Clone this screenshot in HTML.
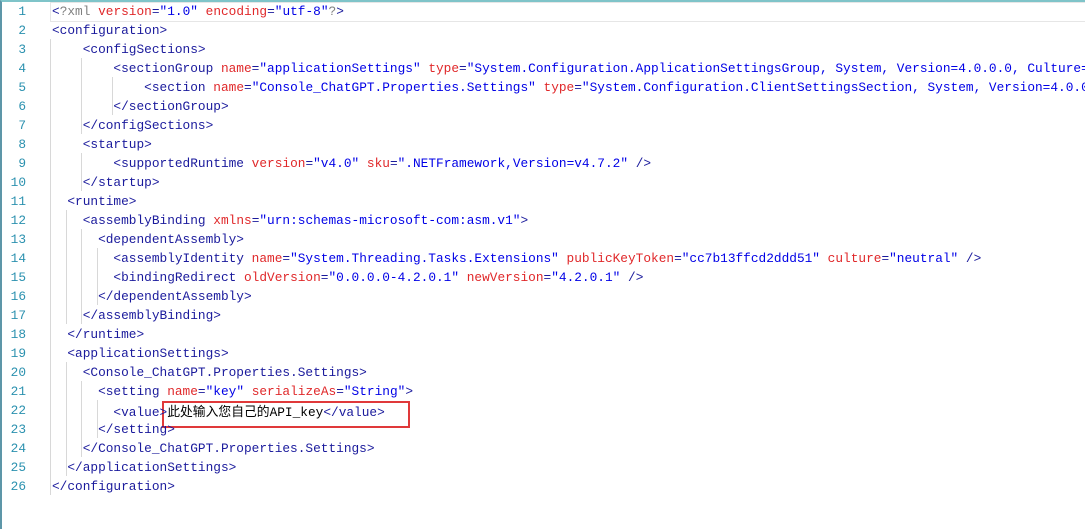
<!DOCTYPE html>
<html><head><meta charset="utf-8">
<style>
html,body{margin:0;padding:0;background:#fff;width:1085px;height:529px;overflow:hidden}
#wrap{position:relative;width:1085px;height:529px;border-top:2px solid #7fc4c9;border-left:2px solid #5d96a8;box-sizing:border-box;overflow:hidden}
.ln{position:absolute;left:0;width:24px;text-align:right;color:#2b91af;font:12.8px "Liberation Mono",monospace}
.ln div,.code div{height:19px;line-height:19px;overflow:visible;white-space:pre}
.code{position:absolute;left:50px;font:12.8px "Liberation Mono",monospace;color:#1a1a9c}
.a{color:#e0282a}.v{color:#0000e6}.g{color:#808080}
.cjk{font-family:"Noto Sans CJK SC",sans-serif;color:#000;line-height:19px}
.k{color:#000}
#cur{position:absolute;left:48px;top:0px;width:1040px;height:18px;border:1px solid #e6e6e6;border-right:none}
#box{position:absolute;left:160px;top:399px;width:244px;height:23px;border:2px solid #e0393a}
.gd{position:absolute;width:0;border-left:1px solid #d8d8d8}
</style></head><body><div id="wrap">
<div id="cur"></div>
<div class="gd" style="left:48px;top:37px;height:456px"></div>
<div class="gd" style="left:79px;top:56px;height:76px"></div>
<div class="gd" style="left:110px;top:75px;height:38px"></div>
<div class="gd" style="left:79px;top:151px;height:38px"></div>
<div class="gd" style="left:64px;top:208px;height:114px"></div>
<div class="gd" style="left:79px;top:227px;height:95px"></div>
<div class="gd" style="left:95px;top:246px;height:57px"></div>
<div class="gd" style="left:64px;top:360px;height:114px"></div>
<div class="gd" style="left:79px;top:379px;height:76px"></div>
<div class="gd" style="left:95px;top:398px;height:38px"></div>
<div id="box"></div>
<div class="ln" style="top:0px"><div>1</div><div>2</div><div>3</div><div>4</div><div>5</div><div>6</div><div>7</div><div>8</div><div>9</div><div>10</div><div>11</div><div>12</div><div>13</div><div>14</div><div>15</div><div>16</div><div>17</div><div>18</div><div>19</div><div>20</div><div>21</div><div>22</div><div>23</div><div>24</div><div>25</div><div>26</div></div>
<div class="code" style="top:0px"><div>&lt;<span class="g">?xml</span> <span class="a">version</span>=<span class="v">"1.0"</span> <span class="a">encoding</span>=<span class="v">"utf-8"</span><span class="g">?</span>&gt;</div><div>&lt;configuration&gt;</div><div>    &lt;configSections&gt;</div><div>        &lt;sectionGroup <span class="a">name</span>=<span class="v">"applicationSettings"</span> <span class="a">type</span>=<span class="v">"System.Configuration.ApplicationSettingsGroup, System, Version=4.0.0.0, Culture=neutral"</span></div><div>            &lt;section <span class="a">name</span>=<span class="v">"Console_ChatGPT.Properties.Settings"</span> <span class="a">type</span>=<span class="v">"System.Configuration.ClientSettingsSection, System, Version=4.0.0.0"</span></div><div>        &lt;/sectionGroup&gt;</div><div>    &lt;/configSections&gt;</div><div>    &lt;startup&gt;</div><div>        &lt;supportedRuntime <span class="a">version</span>=<span class="v">"v4.0"</span> <span class="a">sku</span>=<span class="v">".NETFramework,Version=v4.7.2"</span> /&gt;</div><div>    &lt;/startup&gt;</div><div>  &lt;runtime&gt;</div><div>    &lt;assemblyBinding <span class="a">xmlns</span>=<span class="v">"urn:schemas-microsoft-com:asm.v1"</span>&gt;</div><div>      &lt;dependentAssembly&gt;</div><div>        &lt;assemblyIdentity <span class="a">name</span>=<span class="v">"System.Threading.Tasks.Extensions"</span> <span class="a">publicKeyToken</span>=<span class="v">"cc7b13ffcd2ddd51"</span> <span class="a">culture</span>=<span class="v">"neutral"</span> /&gt;</div><div>        &lt;bindingRedirect <span class="a">oldVersion</span>=<span class="v">"0.0.0.0-4.2.0.1"</span> <span class="a">newVersion</span>=<span class="v">"4.2.0.1"</span> /&gt;</div><div>      &lt;/dependentAssembly&gt;</div><div>    &lt;/assemblyBinding&gt;</div><div>  &lt;/runtime&gt;</div><div>  &lt;applicationSettings&gt;</div><div>    &lt;Console_ChatGPT.Properties.Settings&gt;</div><div>      &lt;setting <span class="a">name</span>=<span class="v">"key"</span> <span class="a">serializeAs</span>=<span class="v">"String"</span>&gt;</div><div>        &lt;value&gt;<span class="cjk">此处输入您自己的</span><span class="k">API_key</span>&lt;/value&gt;</div><div>      &lt;/setting&gt;</div><div>    &lt;/Console_ChatGPT.Properties.Settings&gt;</div><div>  &lt;/applicationSettings&gt;</div><div>&lt;/configuration&gt;</div></div>
</div></body></html>
